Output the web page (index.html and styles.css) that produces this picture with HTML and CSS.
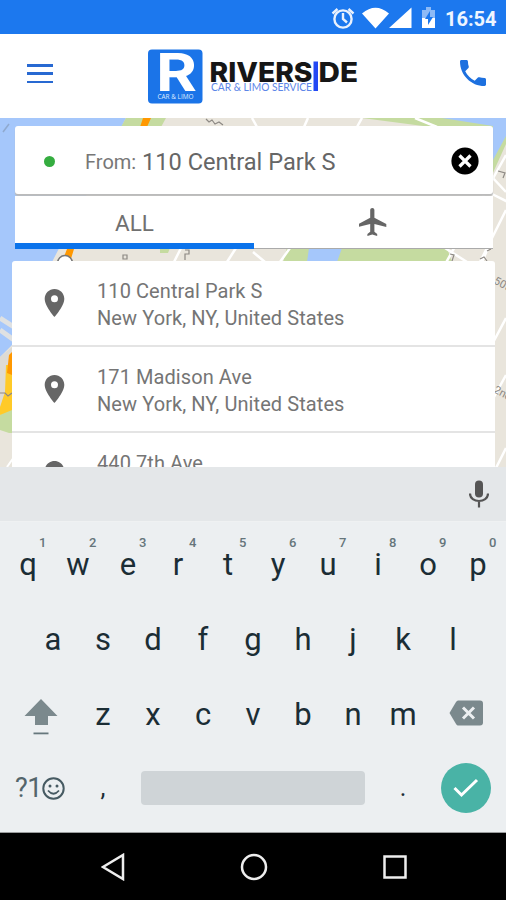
FILE: index.html
```html
<!DOCTYPE html>
<html lang="en">
<head>
<meta charset="utf-8">
<title>Riverside Car &amp; Limo Service</title>
<link rel="stylesheet" href="styles.css">
</head>
<body>
<div class="status">
  <svg width="86" height="26" viewBox="330 4 86 26">
    <g fill="none" stroke="#e9f1fd" stroke-width="2.4"><circle cx="343" cy="19" r="8.6"/><path d="M343 13v6l4 3.5M332.500 13.500l5-4.500M353.500 13.500l-5-4.500"/></g>
    <path fill="#fff" d="M362 13.500Q375.500 2 389 13.500L375.500 28.500ZM411.500 7.500V28H389Z"/>
  </svg>
  <svg class="battery" width="14" height="22" viewBox="0 0 14 22"><path fill="#8dbaf6" d="M4 0h5v3h4v9H0V3h4z"/><path fill="#fff" d="M0 11h13v10H0z"/><path fill="#1c78ee" d="M8 4 3 12h3v6l5-8H8z"/></svg>
  <span class="clock">16:54</span>
</div>
<header class="header">
  <div class="menu"><i></i><i></i><i></i></div>
  <svg class="brand" width="212" height="56" viewBox="148 49 212 56">
    <rect x="148" y="49.500" width="54.500" height="54" rx="4" fill="#1b74e8"/>
    <text class="letter" x="156" y="91" textLength="41" lengthAdjust="spacingAndGlyphs">R</text>
    <text class="tiny" x="157.500" y="98.500" textLength="36" lengthAdjust="spacingAndGlyphs">CAR &amp; LIMO</text>
    <text class="name" x="209.500" y="81.500" textLength="103" lengthAdjust="spacingAndGlyphs">RIVERS</text>
    <text class="name" x="318.500" y="81.500" textLength="39.500" lengthAdjust="spacingAndGlyphs">DE</text>
    <rect x="313.500" y="61.500" width="4.500" height="29.500" fill="#2348f4"/>
    <text class="sub" x="211" y="91.300" textLength="101" lengthAdjust="spacingAndGlyphs">CAR &amp; LIMO SERVICE</text>
  </svg>
  <svg class="phone" width="26" height="26" viewBox="3 3 18 18"><path fill="#1d70df" d="M6.620 10.790c1.440 2.830 3.760 5.140 6.590 6.590l2.200-2.200c.27-.27.67-.36 1.020-.24 1.120.37 2.330.57 3.570.57.550 0 1 .45 1 1V20c0 .55-.45 1-1 1-9.390 0-17-7.610-17-17 0-.55.450-1 1-1h3.500c.550 0 1 .45 1 1 0 1.250.2 2.450.57 3.570.110.350.030.740-.250 1.020l-2.200 2.200z"/></svg>
</header>
<main class="stage">
  <svg class="map" width="506" height="349" viewBox="0 118 506 349">
    <path fill="#e9e5dc" d="M0 118h506v349H0z"/>
    <path fill="#a5c7fb" d="M0 118h126L52 262 12 345 0 357z"/>
    <path fill="#c5dba0" d="M126 118h40l-5 9h-40z"/>
    <path fill="#ff9800" d="M143 118h8l-4 9h-7zM67 249h7l-4 13h-8z"/>
    <path fill="#c5dba0" d="M362 118h144v26L492 175v-40zM289 240h155l8 22H283zM160 248h10l-2 5h-8z"/>
    <path fill="#a5c7fb" d="M442 118h64v18L493 160v-34zM309 248h33l-5 14h-30z"/>
    <g fill="none" stroke="#fff" stroke-width="2.500">
      <path d="m362 118-5 9M308 118l-4 9M252 118l5 9M415 118l22 9M506 155 375 390M492 177l14 15M492 194l20 10M506 210l-60 120M445 248l22 14M488 248l-6 14M506 318l-18 34M506 375l-30 55M506 448l-30 60M181 248l-7 14M236 248l-9 14M290 248l-10 14M253 252l12 10"/>
      <path d="m0 318 14 9M0 330l14 10" stroke="#dfe1e2" stroke-width="5"/>
    </g>
    <path fill="#dedbd4" d="m0 357 12-10v60H0z"/>
    <path fill="#c5dba0" d="m0 415 12-9v28L0 430z"/><path fill="#ffca28" d="M6 365h6v45L0 415v-8l5-15z"/><path fill="#ff9800" d="m9 355 3-3v23l-5-2z"/>
    <path fill="#e9e5dc" d="M0 433h12v34H0z"/><path stroke="#fff" stroke-width="2" d="m7 467 7-10"/>
    <circle cx="65" cy="263" r="7.500" fill="#fff" stroke="#777" stroke-width="1.500"/>
    <path d="m3 132 6-8" stroke="#8fa9cf" stroke-width="1.500"/>
    <g fill="none" stroke="#8d8984" stroke-width="1.200"><path d="m206 119 3 3 3-2 3 4 4-2 4 3M123 255h4v4h-4zM185 250h4v4h-4v6M450 254l4 1-2 6M480 259l4-2 3 4M487 251l4-2M0 393h5l3 3 4-3M498 171l7 2-2 5"/></g>
    <g class="street"><text transform="translate(493 283) rotate(28)">50th St</text><text transform="translate(493 392) rotate(28)">2nd Ave</text></g>
  </svg>
  <div class="search">
    <span class="dot"></span><span class="from">From:</span><span class="query">110 Central Park S</span>
    <svg class="clear" width="28" height="28" viewBox="0 0 28 28"><circle cx="14" cy="14" r="13.600"/><path stroke="#fff" stroke-width="3.200" d="m8.500 8.500 11 11m0-11-11 11"/></svg>
  </div>
  <div class="tabs">
    <div class="tab active">ALL</div>
    <div class="tab"><svg width="28" height="28" viewBox="2 2 20 20"><path fill="#666" d="M21.500 15.500v-2L13 9V3.500C13 2.670 12.330 2 11.500 2S10 2.670 10 3.500V9l-8.500 4.500v2L10 13.500V19l-2 1.500V22l3.500-1 3.500 1v-1.500L13 19v-5.500z"/></svg></div>
  </div>
  <div class="list">
    <div class="row"><svg class="pin" viewBox="5 2 14 20"><path d="M12 2C8.130 2 5 5.130 5 9c0 5.250 7 13 7 13s7-7.750 7-13c0-3.870-3.130-7-7-7zm0 9.500a2.500 2.500 0 0 1 0-5 2.500 2.500 0 0 1 0 5z"/></svg><div class="addr"><div>110 Central Park S</div><div>New York, NY, United States</div></div></div>
    <div class="row"><svg class="pin" viewBox="5 2 14 20"><path d="M12 2C8.130 2 5 5.130 5 9c0 5.250 7 13 7 13s7-7.750 7-13c0-3.870-3.130-7-7-7zm0 9.500a2.500 2.500 0 0 1 0-5 2.500 2.500 0 0 1 0 5z"/></svg><div class="addr"><div>171 Madison Ave</div><div>New York, NY, United States</div></div></div>
    <div class="row"><svg class="pin" viewBox="5 2 14 20"><path d="M12 2C8.130 2 5 5.130 5 9c0 5.250 7 13 7 13s7-7.750 7-13c0-3.870-3.130-7-7-7zm0 9.500a2.500 2.500 0 0 1 0-5 2.500 2.500 0 0 1 0 5z"/></svg><div class="addr"><div>440 7th Ave</div></div></div>
  </div>
</main>
<div class="suggest">
  <svg width="20" height="28" viewBox="0 0 20 28"><rect x="6" y="0.500" width="8" height="17" rx="4" fill="#555"/><path d="M1 13.500c0 10 18 10 18 0M10 21v6.500" fill="none" stroke="#555" stroke-width="2.200"/></svg>
</div>
<div class="keyboard">
  <div class="keys">
    <span>q<sup>1</sup></span><span>w<sup>2</sup></span><span>e<sup>3</sup></span><span>r<sup>4</sup></span><span>t<sup>5</sup></span><span>y<sup>6</sup></span><span>u<sup>7</sup></span><span>i<sup>8</sup></span><span>o<sup>9</sup></span><span>p<sup>0</sup></span>
  </div>
  <div class="keys"><span>a</span><span>s</span><span>d</span><span>f</span><span>g</span><span>h</span><span>j</span><span>k</span><span>l</span></div>
  <div class="keys">
    <span class="wide"><svg class="shift" width="34" height="38" viewBox="0 0 34 38"><path fill="#7b898d" d="M17 1 33.500 18H24v9H11v-9H.5z"/><path fill="#66777c" d="M9.500 34.500h15v1.800h-15z"/></svg></span><span>z</span><span>x</span><span>c</span><span>v</span><span>b</span><span>n</span><span>m</span><span class="wide"><svg class="erase" width="34" height="26" viewBox="0 0 34 26"><path fill="#7b898d" d="M9 .5h22q3 0 3 3v19q0 3-3 3H9q-1 0-2-1.500L.5 13 7 2q1-1.500 2-1.500z"/><path stroke="#eceff1" stroke-width="3" d="m14 7.500 11 11m0-11-11 11"/></svg></span>
  </div>
  <div class="keys last">
    <span class="sym">?1<svg width="23" height="23" viewBox="0 0 23 23"><circle cx="11.500" cy="11.500" r="10.200" fill="none" stroke="#465a62" stroke-width="2"/><circle cx="8" cy="9" r="1.500" fill="#465a62"/><circle cx="15" cy="9" r="1.500" fill="#465a62"/><path d="M6 13.500q5.500 6.500 11 0" fill="none" stroke="#465a62" stroke-width="1.800"/></svg></span>
    <span class="comma">,</span><span class="space"></span><span class="period">.</span>
    <span class="enter"><svg width="26" height="20" viewBox="0 0 26 20"><path d="m1.500 10 7 7L24 2" fill="none" stroke="#fff" stroke-width="3"/></svg></span>
  </div>
</div>
<nav class="nav">
  <svg width="24" height="28" viewBox="0 0 24 28"><path d="M22 2v24L2 14z"/></svg>
  <svg width="28" height="28" viewBox="0 0 28 28"><circle cx="14" cy="14" r="12"/></svg>
  <svg width="24" height="24" viewBox="0 0 24 24"><path d="M1.500 1.500h21v21h-21z"/></svg>
</nav>
</body>
</html>
```
FILE: styles.css
```css
* { box-sizing: border-box; }
body { margin: 0; width: 506px; height: 900px; overflow: hidden; font-family: Roboto, sans-serif; background: #000; }
svg { display: block; flex: none; }
.status { height: 34px; background: #1c78ee; display: flex; align-items: center; padding: 4px 10px 0 330px; }
.status > svg:first-child { margin-top: -4px; }
.battery { margin: -2px 0 0 6px; }
.clock { margin-left: 9px; color: #eef5ff; font-weight: 700; font-size: 20px; line-height: 26px; white-space: nowrap; }
.header { height: 84px; background: #fff; display: flex; align-items: flex-start; padding: 15px 20px 0 27px; }
.menu { width: 26px; height: 19px; margin-top: 15px; display: flex; flex-direction: column; justify-content: space-between; }
.menu i { height: 2.500px; background: #2869d2; }
.brand { margin-left: 95px; }
.letter { font: 700 52px Inter, sans-serif; fill: #fff; }
.tiny { font: 6.500px "Open Sans", sans-serif; fill: #dceaff; }
.name { font: 800 27px Inter, sans-serif; fill: #161616; }
.sub { font: 11px Lato, sans-serif; fill: #5c86e8; }
.phone { margin: 11px 0 0 100px; }
.stage { position: relative; height: 349px; overflow: hidden; padding: 8px 12px 0; }
.map { position: absolute; left: 0; top: 0; }
.street text { font-size: 11px; fill: #8d8984; }
.search, .tabs, .list { position: relative; background: #fff; }
.search { height: 68px; margin: 0 1px 0 3px; border-radius: 3px; display: flex; align-items: center; padding: 2px 14px 0 29px; box-shadow: 0 2px 1px #bbb; white-space: nowrap; color: #666; }
.dot { width: 11px; height: 11px; border-radius: 50%; background: #35ad40; }
.from { margin-left: 30px; width: 57px; padding-top: 1px; font-size: 20px; color: #777; }
.query { padding-top: 1px; font-size: 23.600px; }
.clear { margin-left: auto; }
.tabs { height: 53px; margin: 2px 1px 0 3px; display: flex; border-bottom: 1px solid #aaa; }
.tab { flex: 1; height: 53px; display: flex; align-items: center; justify-content: center; font-size: 22.500px; color: #707070; }
.tab.active { border-bottom: 6px solid #0b73eb; padding-top: 7px; }
.tab svg { margin: -1px 2px 0 0; }
.list { margin-top: 12px; width: 483px; border-radius: 3px 3px 0 0; }
.row { height: 86px; border-bottom: 2px solid #e4e4e4; display: flex; padding: 16px 0 0 32px; }
.pin { width: 21px; height: 28px; margin-top: 12px; fill: #666; }
.addr { margin: 1px 0 0 32px; font-size: 20px; line-height: 27px; letter-spacing: .080px; color: #757575; white-space: nowrap; }
.suggest { height: 55px; background: #e4e7e9; display: flex; justify-content: flex-end; align-items: center; padding-right: 17px; border-bottom: 1px solid #eff1f2; }
.keyboard { height: 311px; background: #eceff1; padding: 5px 3px 0; color: #1b2d35; border-bottom: 1px solid #9a9c9d; }
.keys { height: 75px; display: flex; justify-content: center; }
.keys > span { position: relative; width: 50px; font-size: 31px; line-height: 75px; text-align: center; }
.keys sup { position: absolute; left: 36px; top: 8px; font-size: 13px; font-weight: 500; line-height: 15px; color: #66757b; }
.keys > .wide { width: 75px; display: flex; align-items: center; justify-content: center; }
.shift { margin-top: 5px; }
.erase { margin: -4px 0 0; }
.keys.last { height: 72px; justify-content: flex-start; align-items: center; }
.keys.last > span { line-height: 72px; }
.keys > .sym { width: 75px; display: flex; align-items: center; padding-left: 12px; font-size: 27px; letter-spacing: -.500px; color: #54656b; }
.keys.last > .comma, .keys.last > .period { font-size: 25px; line-height: 76px; }
.keys > .space { width: 224px; height: 34px; margin-left: 13px; border-radius: 4px; background: #cfd4d7; }
.keys > .period { margin-left: 13px; }
.keys > .enter { width: 50px; height: 50px; margin-left: 13px; border-radius: 50%; background: #49b3a6; display: flex; align-items: center; justify-content: center; }
.nav { height: 67px; background: #000; display: flex; align-items: center; padding-left: 101px; }
.nav svg { fill: none; stroke: #eee; stroke-width: 2.500; }
.nav svg + svg { margin-left: 115px; }
```
